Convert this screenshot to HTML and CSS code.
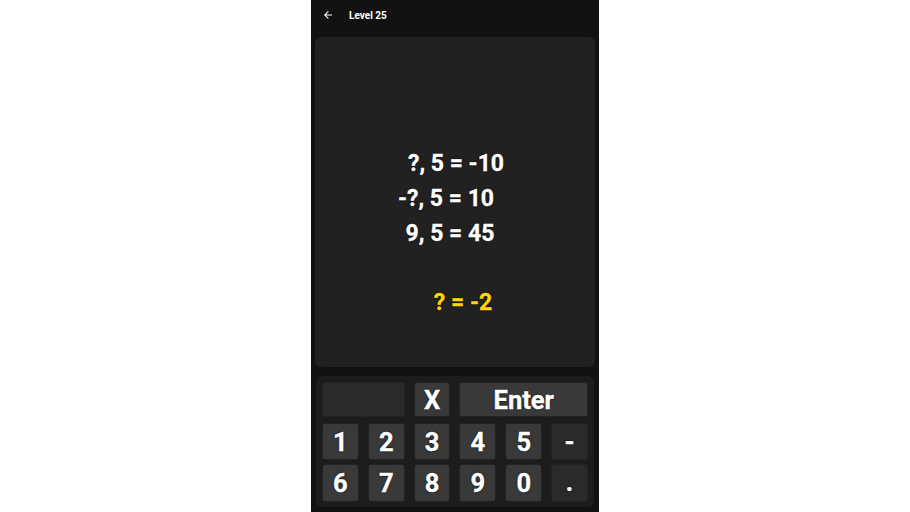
FILE: index.html
```html
<!DOCTYPE html>
<html>
<head>
<meta charset="utf-8">
<link rel="stylesheet" href="styles.css">
</head>
<body>
<div class="phone">
  <div class="header">
    <svg class="back" viewBox="0 0 24 24" width="12" height="12"><path d="M20 11H7.83l5.59-5.59L12 4l-8 8 8 8 1.41-1.41L7.83 13H20v-2z" fill="#fff"/></svg>
    <span class="title">Level 25</span>
  </div>
  <div class="card">
    <div class="eq">
      <div class="line l1">?, 5 = -10</div>
      <div class="line l2">-?, 5 = 10</div>
      <div class="line l3">9, 5 = 45</div>
    </div>
    <div class="answer">? = -2</div>
  </div>
  <div class="pad">
    <div class="key field"></div>
    <div class="key">X</div>
    <div class="key enter">Enter</div>
    <div class="key">1</div>
    <div class="key">2</div>
    <div class="key">3</div>
    <div class="key">4</div>
    <div class="key">5</div>
    <div class="key dark">-</div>
    <div class="key">6</div>
    <div class="key">7</div>
    <div class="key">8</div>
    <div class="key">9</div>
    <div class="key">0</div>
    <div class="key dark dot">.</div>
  </div>
</div>
</body>
</html>
```
FILE: styles.css
```css
html, body { margin: 0; padding: 0; background: #fff; }
body { font-family: Roboto, "Noto Sans", sans-serif; }
.phone {
  width: 288px; height: 512px; margin-left: 311px;
  background: #121212; display: flex; flex-direction: column;
}
.header {
  height: 33px; display: flex; align-items: center; padding-left: 11px;
  box-sizing: border-box; background: #121212;
}
.back { display: block; margin-top: -3px; }
.title { color: #fff; font-weight: 700; font-size: 10px; margin-left: 15px; margin-top: -3px; }
.card {
  margin: 4px 4px 0; height: 330px; background: #212121; border-radius: 6px;
  display: flex; flex-direction: column; align-items: center; box-sizing: border-box;
  padding-top: 109px;
}
.eq { display: flex; flex-direction: column; align-items: center; }
.line { color: #fff; font-weight: 700; font-size: 23px; line-height: 35px; text-shadow: 0 0 2px #000; -webkit-text-stroke: 0.3px #fff; }
.l1 { padding-left: 2px; }
.l2 { padding-right: 18px; }
.l3 { padding-right: 10px; }
.answer { color: #ffd600; font-weight: 700; font-size: 23px; line-height: 35px; margin-top: 34px; padding-left: 16px; text-shadow: 0 0 2px #000; -webkit-text-stroke: 0.3px #ffd600; }
.pad {
  margin: 9px 5px 5px; height: 131px; box-sizing: border-box;
  background: #1c1c1c; border-radius: 6px; padding: 6px 6px 5px;
  display: grid; grid-template-columns: repeat(6, 1fr); grid-template-rows: 35px 43px 42px;
  column-gap: 9px; row-gap: 0;
}
.key {
  background: #393939; border: 1px solid #222; border-radius: 3px; box-sizing: border-box;
  color: #fff; font-weight: 700; font-size: 25.5px; display: flex; align-items: center; justify-content: center;
  text-shadow: 0 0 2px #000, 0 0 1px #000; -webkit-text-stroke: 0.4px #fff;
}
.pad > .key:nth-child(n+4) { margin-top: 6px; }
.pad > .key:nth-child(n+10) { margin-top: 4px; }
.field { grid-column: span 2; background: #2a2a2a; }
.enter { grid-column: span 3; }
.dark { background: #2a2a2a; }
.dot { align-items: flex-end; padding-bottom: 4px; }
```
